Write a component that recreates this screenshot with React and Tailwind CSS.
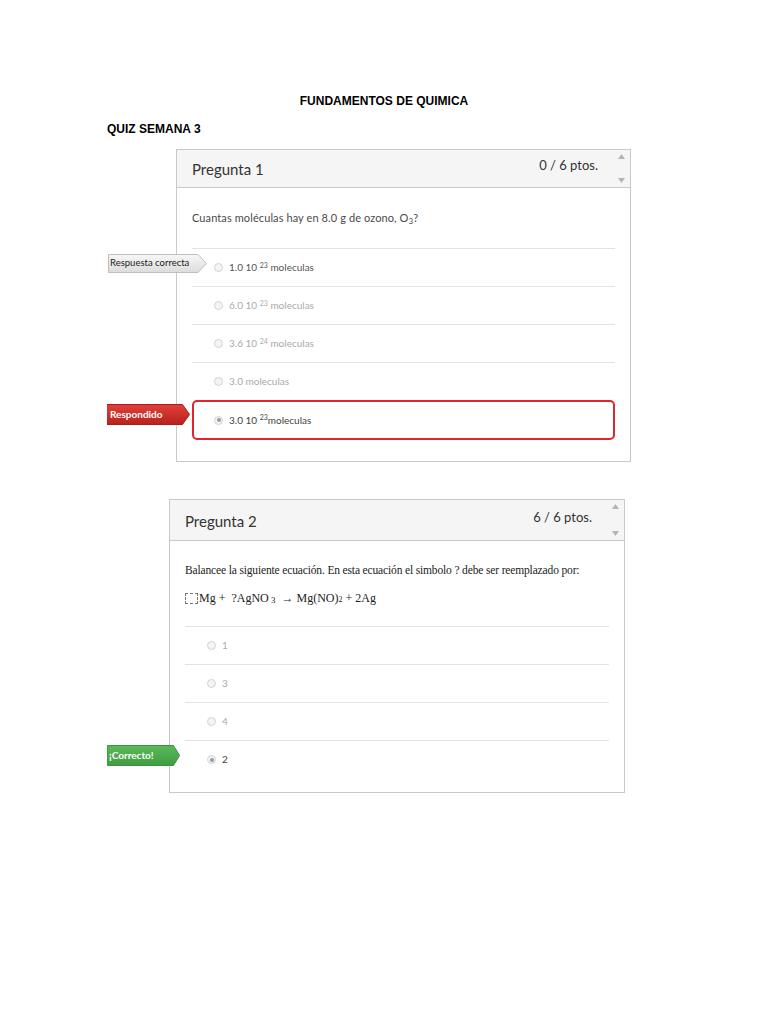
import React from "react";

const lato = "font-['Lato','Open_Sans',sans-serif]";

function Arrows() {
    return (
        <div className="flex h-full w-[14px] flex-col items-center justify-between py-[4px]">
            <svg width="7" height="5" viewBox="0 0 7 5"><path d="M0 5 L3.5 0 L7 5 Z" fill="#b5b5b5" /></svg>
            <svg width="7" height="5" viewBox="0 0 7 5"><path d="M0 0 L3.5 5 L7 0 Z" fill="#b5b5b5" /></svg>
        </div>
    );
}

function Radio({ checked }) {
    return (
        <span className="flex h-[9px] w-[9px] items-center justify-center rounded-full border border-[#d3d3d3] bg-[#f4f4f4]">
            {checked && <span className="h-[4px] w-[4px] rounded-full bg-[#9a9a9a]" />}
        </span>
    );
}

function Tag({ kind, children, className }) {
    const fill = {
        gray: ["#f7f7f7", "#dcdcdc", "#bdbdbd"],
        red: ["#e0403a", "#b8221d", "#a51c18"],
        green: ["#5cb85c", "#3f9e3f", "#3a923a"],
    }[kind];
    return (
        <div className={"absolute flex items-center " + className}>
            <svg className="absolute inset-0 h-full w-full" preserveAspectRatio="none" viewBox="0 0 100 20">
                <defs>
                    <linearGradient id={"g-" + kind} x1="0" y1="0" x2="0" y2="1">
                        <stop offset="0" stopColor={fill[0]} />
                        <stop offset="1" stopColor={fill[1]} />
                    </linearGradient>
                </defs>
                <path d="M0.5 0.5 H91 L99.5 10 L91 19.5 H0.5 Z" fill={"url(#g-" + kind + ")"} stroke={fill[2]} strokeWidth="1" vectorEffect="non-scaling-stroke" />
            </svg>
            <span className={"relative whitespace-nowrap " + lato + (kind === "gray" ? " text-[9.5px] text-[#222]" : " text-[10px] font-bold text-white")}>
                {children}
            </span>
        </div>
    );
}

function Option({ children, tone, checked, tag, border = true }) {
    return (
        <div className={"relative flex h-[38px] items-center " + (border ? "border-t border-[#e3e3e3]" : "")}>
            {tag}
            <div className="flex items-center gap-[6px] pl-[22px]">
                <Radio checked={checked} />
                <span className={"text-[10px] " + lato + " " + tone}>{children}</span>
            </div>
        </div>
    );
}

function Sci({ a, e }) {
    return (
        <>
            {a} 10 <sup className="text-[7px]">{e}</sup> moleculas
        </>
    );
}

export default function App() {
    return (
        <div className="min-h-[1024px] w-[768px] bg-white pt-[94px]">
            <h1 className="h-[14px] text-center font-['Liberation_Sans',Arial,sans-serif] text-[12px] font-bold leading-[14px] text-black">
                FUNDAMENTOS DE QUIMICA
            </h1>
            <h2 className="ml-[107px] mt-[14px] h-[14px] font-['Liberation_Sans',Arial,sans-serif] text-[12px] font-bold leading-[14px] text-black">
                QUIZ SEMANA 3
            </h2>

            <div className="ml-[107px] mt-[13px] w-[530px] overflow-hidden">
                <div className="ml-[69px] w-[455px] border border-[#c9c9c9] bg-white">
                    <div className="flex h-[38px] items-stretch border-b border-[#c9c9c9] bg-[#f5f5f5] pl-[15px] pr-[2px]">
                        <div className={"flex flex-1 items-center pt-[2px] text-[15px] text-[#333] " + lato}>Pregunta 1</div>
                        <div className={"flex items-start pt-[6px] pr-[16px] text-[13px] text-[#333] " + lato}>0 / 6 ptos.</div>
                        <Arrows />
                    </div>
                    <div className="px-[15px] pt-[22px] pb-[21px]">
                        <p className={"mb-[22px] h-[16px] text-[11px] tracking-[0.1px] leading-[16px] text-[#4a4a4a] " + lato}>
                            Cuantas moléculas hay en 8.0 g de ozono, O<sub className="text-[8px]">3</sub>?
                        </p>
                        <Option
                            tone="text-[#555]"
                            tag={<Tag kind="gray" className="left-[-84px] top-[5px] h-[19px] w-[99px] pl-[2px]">Respuesta correcta</Tag>}
                        >
                            <Sci a="1.0" e="23" />
                        </Option>
                        <Option tone="text-[#aaa]"><Sci a="6.0" e="23" /></Option>
                        <Option tone="text-[#aaa]"><Sci a="3.6" e="24" /></Option>
                        <Option tone="text-[#aaa]">3.0 moleculas</Option>
                        <div className="relative">
                            <Tag kind="red" className="left-[-86px] top-[4px] h-[21px] w-[84px] pl-[4px]">Respondido</Tag>
                            <div className="flex h-[40px] items-center gap-[6px] rounded-[5px] border-2 border-[#e0262b] pl-[20px]">
                                <Radio checked />
                                <span className={"text-[10px] text-[#444] " + lato}>
                                    3.0 10 <sup className="text-[7px]">23</sup>moleculas
                                </span>
                            </div>
                        </div>
                    </div>
                </div>
            </div>

            <div className="ml-[107px] mt-[37px] w-[530px] overflow-hidden">
                <div className="ml-[62px] w-[456px] border border-[#c9c9c9] bg-white">
                    <div className="flex h-[41px] items-stretch border-b border-[#c9c9c9] bg-[#f5f5f5] pl-[15px] pr-[2px]">
                        <div className={"flex flex-1 items-center pt-[2px] text-[15px] text-[#333] " + lato}>Pregunta 2</div>
                        <div className={"flex items-start pt-[8px] pr-[16px] text-[13px] text-[#333] " + lato}>6 / 6 ptos.</div>
                        <Arrows />
                    </div>
                    <div className="px-[15px] pt-[21px] pb-[14px]">
                        <p className="h-[16px] whitespace-nowrap font-['Liberation_Serif','Times_New_Roman',serif] text-[11.5px] tracking-[-0.15px] leading-[16px] text-[#222]">
                            Balancee la siguiente ecuación. En esta ecuación el simbolo ? debe ser reemplazado por:
                        </p>
                        <p className="mt-[12px] mb-[20px] flex h-[16px] items-center whitespace-nowrap font-['Liberation_Serif','Times_New_Roman',serif] text-[12px] leading-[16px] text-[#222]">
                            <span className="mr-[1px] inline-block h-[11px] w-[13px] border border-dashed border-[#777]" />
                            Mg +&nbsp;&nbsp;?AgNO<sub className="text-[9px]">&nbsp;3</sub>&nbsp;&nbsp;→&nbsp;Mg(NO)<sub className="text-[8px]">2</sub>&nbsp;+ 2Ag
                        </p>
                        <Option tone="text-[#aaa]">1</Option>
                        <Option tone="text-[#aaa]">3</Option>
                        <Option tone="text-[#aaa]">4</Option>
                        <Option
                            tone="text-[#444]"
                            checked
                            tag={<Tag kind="green" className="left-[-78px] top-[4px] h-[21px] w-[73px] pl-[2px]">¡Correcto!</Tag>}
                        >
                            2
                        </Option>
                    </div>
                </div>
            </div>
        </div>
    );
}
